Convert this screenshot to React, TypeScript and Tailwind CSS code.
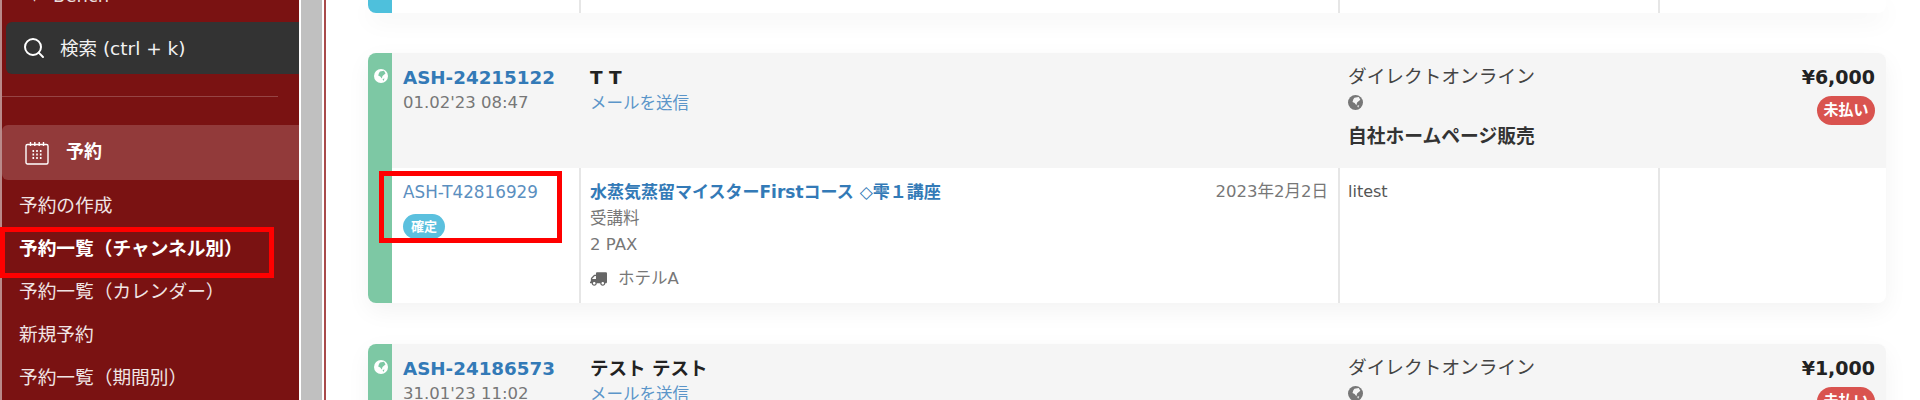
import React from "react";
import { Search } from "lucide-react";

const font = "font-['DejaVu_Sans','Noto_Sans_CJK_JP',sans-serif]";
const cols = "grid-cols-[187px_759px_320px_1fr]";

function Globe({ className, land }: { className?: string; land: string }) {
  return (
    <svg viewBox="0 0 14 14" className={className}>
      <circle cx="7" cy="7" r="7" fill="currentColor" />
      <path d="M6 2.5 L10 1.8 L11.5 4.5 L8.500 7 L7.800 9.500 L6.200 7.500 L4.200 6.500 L5 4 Z M8.500 10 L10.500 9.500 L9.500 12 Z" fill={land} />
    </svg>
  );
}

function CalendarGrid() {
  return (
    <svg viewBox="0 0 24 24" className="h-6 w-6 text-white" fill="none" stroke="currentColor" strokeWidth="1.4">
      <rect x="1" y="3.5" width="22" height="19.5" rx="1.5" />
      <path d="M5.5 1v4M9.8 1v4M14.2 1v4M18.5 1v4" />
      <path d="M7.5 10h1.6M11.2 10h1.6M14.9 10h1.6M7.5 13.5h1.6M11.2 13.500h1.6M14.9 13.5h1.6M7.5 17h1.6M11.2 17h1.6M14.9 17h1.6" strokeWidth="2" />
    </svg>
  );
}

function TruckSolid() {
  return (
    <svg viewBox="0 0 640 512" className="h-[14px] w-[17px] -scale-x-100 text-[#666666]" fill="currentColor">
      <path d="M624 352h-16V243.900c0-12.700-5.100-24.900-14.100-33.900L494 110.100c-9-9-21.200-14.100-33.900-14.100H416V48c0-26.500-21.500-48-48-48H48C21.500 0 0 21.500 0 48v320c0 26.500 21.500 48 48 48h16c0 53 43 96 96 96s96-43 96-96h128c0 53 43 96 96 96s96-43 96-96h48c8.800 0 16-7.200 16-16v-32c0-8.800-7.200-16-16-16zM160 464c-26.500 0-48-21.500-48-48s21.500-48 48-48 48 21.500 48 48-21.500 48-48 48zm320 0c-26.500 0-48-21.500-48-48s21.500-48 48-48 48 21.500 48 48-21.500 48-48 48zm80-208H416V144h44.100l99.900 99.900V256z" />
    </svg>
  );
}

function Sidebar() {
  const items = ["予約の作成", "予約一覧（チャンネル別）", "予約一覧（カレンダー）", "新規予約", "予約一覧（期間別）"];
  return (
    <aside className="flex w-[297px] shrink-0 flex-col bg-[#7a1212] text-white">
      <div className="h-[23px] overflow-hidden pl-[28px] text-[18px] leading-[10px] text-[#e8dcdc]">
        <span className="relative top-[-9px]">▾</span>
        <span className="relative top-[-9px] ml-[14px]">Bench</span>
      </div>
      <div className="ml-1 flex h-[53px] items-center rounded-l-[6px] bg-[#333333] pl-4">
        <Search size={24} strokeWidth={2} className="text-white" />
        <span className="ml-[14px] text-[18.500px] text-[#f2f2f2]">検索 (ctrl + k)</span>
      </div>
      <div className="mt-[22px] mr-[21px] h-px bg-[#964444]" />
      <div className="mt-[28px] flex h-[56px] items-center rounded-l-[6px] bg-[#923a3a] pl-[23px]">
        <CalendarGrid />
        <span className="ml-[17px] mb-[3px] text-[18px] font-bold">予約</span>
      </div>
      <ul className="mt-[5px] flex flex-col text-[#f0e4e4]">
        {items.map((t, i) => (
          <li key={t} className={`flex h-[43px] items-center pl-[17px] text-[18.700px] ${i === 1 ? "font-bold text-white" : ""}`}>
            {t}
          </li>
        ))}
      </ul>
    </aside>
  );
}

function Card({
  id, date, name, total, children,
}: { id: string; date: string; name: string; total: string; children?: React.ReactNode }) {
  return (
    <div className="flex overflow-hidden rounded-[8px] bg-white shadow-[0_8px_24px_rgba(0,0,0,0.05)]">
      <div className="w-6 shrink-0 bg-[#7dc8a4] pt-[16px] pl-[6px] text-white">
        <Globe className="h-[14px] w-[14px]" land="#7dc8a4" />
      </div>
      <div className="min-w-0 flex-1">
        <div className={`grid h-[115px] ${cols} bg-[#f5f5f5]`}>
          <div className="pl-[11px] pt-[12px]">
            <div className="text-[18.300px] leading-[26px] font-bold text-[#337ab7]">{id}</div>
            <div className="text-[16.500px] leading-[24px] text-[#777777]">{date}</div>
          </div>
          <div className="pl-[11px] pt-[12px]">
            <div className="text-[18.500px] leading-[26px] font-bold text-[#222222]">{name}</div>
            <div className="mt-px text-[16.500px] leading-[24px] text-[#5b95c9]">メールを送信</div>
          </div>
          <div className="pl-[10px] pt-[11px]">
            <div className="text-[18.700px] leading-[26px] text-[#444444]">ダイレクトオンライン</div>
            <Globe className="mt-[5px] h-[15px] w-[15px] text-[#777777]" land="#f5f5f5" />
            <div className="mt-[14px] text-[18.800px] leading-[26px] font-bold text-[#333333]">自社ホームページ販売</div>
          </div>
          <div className="flex flex-col items-end pr-[11px] pt-[11px]">
            <div className="text-[19px] leading-[26px] font-bold text-[#222222]">{total}</div>
            <div className="mt-[6px] flex h-[29px] w-[58px] items-center justify-center rounded-[15px] bg-[#d9534f] text-[15px] font-bold text-white">未払い</div>
          </div>
        </div>
        {children}
      </div>
    </div>
  );
}

function Detail() {
  return (
    <div className={`grid h-[135px] ${cols}`}>
      <div className="pl-[11px] pt-[13px]">
        <div className="text-[16.800px] leading-[22px] text-[#5b8fc0]">ASH-T42816929</div>
        <div className="mt-[11px] flex h-[25px] w-[42px] items-center justify-center rounded-[13px] bg-[#5bc0de] text-[13px] font-bold text-white">確定</div>
      </div>
      <div className="border-l-2 border-[#e6e6e6] pl-[9px] pt-[13px]">
        <div className="flex justify-between pr-[10px] leading-[22px]">
          <span className="text-[17px] font-bold text-[#337ab7]">水蒸気蒸留マイスターFirstコース ◇雫１講座</span>
          <span className="text-[16.500px] text-[#777777]">2023年2月2日</span>
        </div>
        <div className="mt-[5px] text-[16.500px] leading-[22px] text-[#777777]">受講料</div>
        <div className="mt-[4px] text-[16.500px] leading-[22px] text-[#777777]">2 PAX</div>
        <div className="mt-[12px] flex items-center text-[16.500px] leading-[22px] text-[#777777]">
          <TruckSolid />
          <span className="ml-[11px]">ホテルA</span>
        </div>
      </div>
      <div className="border-l-2 border-[#e6e6e6] pl-[8px] pt-[13px] text-[16px] leading-[22px] text-[#555555]">litest</div>
      <div className="border-l-2 border-[#e6e6e6]" />
    </div>
  );
}

export default function App() {
  return (
    <div className={`relative flex h-[400px] w-[1920px] overflow-hidden bg-white ${font}`}>
      <div className="w-[2px] shrink-0 bg-[#b98a8a]" />
      <Sidebar />
      <div className="ml-[2px] w-[21px] shrink-0 bg-[#c0c0c0]" />
      <div className="ml-[2px] w-[2px] shrink-0 bg-[#a84a4a]" />
      <main className="min-w-0 flex-1 pl-[42px] pr-[34px]">
        <div className="flex h-[13px] overflow-hidden rounded-b-[8px] bg-white shadow-[0_8px_24px_rgba(0,0,0,0.05)]">
          <div className="w-6 shrink-0 bg-[#4ec0dc]" />
          <div className={`grid flex-1 ${cols}`}>
            <div />
            <div className="border-l-2 border-[#e6e6e6]" />
            <div className="border-l-2 border-[#e6e6e6]" />
            <div className="border-l-2 border-[#e6e6e6]" />
          </div>
        </div>
        <div className="mt-[40px]">
          <Card id="ASH-24215122" date="01.02'23 08:47" name="T T" total="¥6,000"><Detail /></Card>
        </div>
        <div className="mt-[41px]">
          <Card id="ASH-24186573" date="31.01'23 11:02" name="テスト テスト" total="¥1,000" />
        </div>
      </main>
      <div className="pointer-events-none absolute left-0 top-[227px] h-[51px] w-[274px] border-[5px] border-[#ff0000]" />
      <div className="pointer-events-none absolute left-[379px] top-[171px] h-[72px] w-[183px] border-[5px] border-[#ff0000]" />
    </div>
  );
}
